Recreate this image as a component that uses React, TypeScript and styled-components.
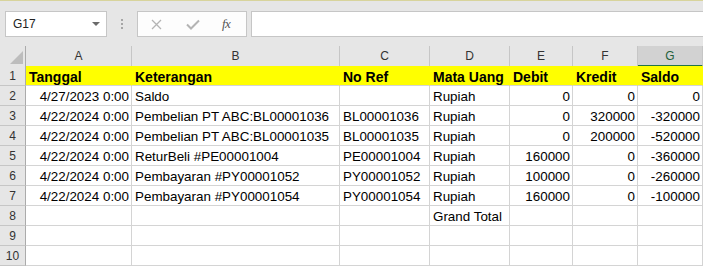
import React from 'react'
import styled, { createGlobalStyle, css } from 'styled-components'

const GlobalStyle = createGlobalStyle`
  html, body {
    margin: 0;
    padding: 0;
    background: #ffffff;
    overflow: hidden;
  }
  * {
    box-sizing: border-box;
  }
`

const Page = styled.div`
  width: 703px;
  height: 266px;
  overflow: hidden;
  font-family: 'Liberation Sans', Arial, sans-serif;
  background: #ffffff;
`

// formula bar
const FormulaBar = styled.div`
  display: flex;
  align-items: flex-start;
  height: 46px;
  padding: 10px 0 0 5px;
  background: #e6e6e6;
  border-top: 1px solid #d8d49c;
`

const NameBox = styled.div`
  display: flex;
  align-items: center;
  justify-content: space-between;
  width: 102px;
  height: 26px;
  padding: 0 6px 0 7px;
  background: #ffffff;
  border: 1px solid #c6c6c6;
  font-size: 12px;
  color: #222222;
`

const Caret = styled.span`
  width: 0;
  height: 0;
  border-left: 4px solid transparent;
  border-right: 4px solid transparent;
  border-top: 4px solid #6a6a6a;
`

const Grip = styled.div`
  display: flex;
  flex-direction: column;
  gap: 2px;
  width: 30px;
  padding: 8px 0 0 14px;

  & > span {
    width: 2px;
    height: 2px;
    background: #a6a6a6;
  }
`

const FxButtons = styled.div`
  display: flex;
  align-items: center;
  width: 110px;
  height: 26px;
  padding: 0 0 0 13px;
  background: #fdfdfd;
  border: 1px solid #c6c6c6;
`

const IconSlot = styled.span<{ $w: number }>`
  display: flex;
  align-items: center;
  width: ${({ $w }) => $w}px;
`

const Fx = styled.span`
  font-family: 'Liberation Serif', 'Times New Roman', serif;
  font-style: italic;
  font-size: 13px;
  color: #555555;
  letter-spacing: -0.5px;
`

const FormulaInput = styled.div`
  flex: 1;
  height: 26px;
  margin-left: 4px;
  background: #ffffff;
  border: 1px solid #c6c6c6;
  border-right: none;
`

// sheet grid
const Sheet = styled.div`
  display: grid;
  grid-template-columns: 26px 106px 208px 90px 80px 63px 65px 1fr;
  grid-auto-rows: 20px;
`

const headerBase = css`
  display: flex;
  align-items: center;
  justify-content: center;
  background: #e6e6e6;
  font-size: 12px;
  color: #333333;
`

const Corner = styled.div`
  ${headerBase};
  height: 21px;
  align-items: flex-end;
  justify-content: flex-end;
  padding: 0 2px 2px 0;
  border-right: 1px solid #ababab;
  border-bottom: 1px solid #ababab;
`

const CornerMark = styled.span`
  width: 0;
  height: 0;
  border-left: 13px solid transparent;
  border-bottom: 13px solid #bdbdbd;
`

const ColHead = styled.div<{ $active?: boolean }>`
  ${headerBase};
  height: 21px;
  border-right: 1px solid #c6c6c6;
  border-bottom: 1px solid #ababab;
  ${({ $active }) =>
    $active &&
    css`
      background: #d2d2d2;
      color: #1f5f3b;
      border-bottom: 2px solid #217346;
    `}
`

const RowHead = styled.div`
  ${headerBase};
  border-right: 1px solid #ababab;
  border-bottom: 1px solid #c6c6c6;
`

const Cell = styled.div<{ $align?: 'left' | 'right'; $fill?: boolean }>`
  display: flex;
  align-items: center;
  justify-content: ${({ $align }) => ($align === 'right' ? 'flex-end' : 'flex-start')};
  padding: 1px 2px 0 3px;
  border-right: 1px solid #d4d4d4;
  border-bottom: 1px solid #d4d4d4;
  font-size: 13.4px;
  color: #000000;
  white-space: nowrap;
  overflow: hidden;
  ${({ $fill }) =>
    $fill &&
    css`
      background: #ffff00;
      border-right-color: #ffff00;
      font-weight: bold;
      font-size: 14px;
      padding-top: 2px;
    `}
`

const columns = ['A', 'B', 'C', 'D', 'E', 'F', 'G']
const align: ('left' | 'right')[] = ['right', 'left', 'left', 'left', 'right', 'right', 'right']
const headers = ['Tanggal', 'Keterangan', 'No Ref', 'Mata Uang', 'Debit', 'Kredit', 'Saldo']

const data = [
  ['4/27/2023 0:00', 'Saldo', '', 'Rupiah', '0', '0', '0'],
  ['4/22/2024 0:00', 'Pembelian PT ABC:BL00001036', 'BL00001036', 'Rupiah', '0', '320000', '-320000'],
  ['4/22/2024 0:00', 'Pembelian PT ABC:BL00001035', 'BL00001035', 'Rupiah', '0', '200000', '-520000'],
  ['4/22/2024 0:00', 'ReturBeli #PE00001004', 'PE00001004', 'Rupiah', '160000', '0', '-360000'],
  ['4/22/2024 0:00', 'Pembayaran #PY00001052', 'PY00001052', 'Rupiah', '100000', '0', '-260000'],
  ['4/22/2024 0:00', 'Pembayaran #PY00001054', 'PY00001054', 'Rupiah', '160000', '0', '-100000'],
  ['', '', '', 'Grand Total', '', '', ''],
  ['', '', '', '', '', '', ''],
  ['', '', '', '', '', '', ''],
]

const CancelIcon = () => (
  <svg width="11" height="11" viewBox="0 0 11 11">
    <path d="M1 1 L10 10 M10 1 L1 10" stroke="#b4b4b4" strokeWidth="1.3" fill="none" />
  </svg>
)

const CheckIcon = () => (
  <svg width="14" height="11" viewBox="0 0 14 11">
    <path d="M1 5.5 L5 9.5 L13 1.5" stroke="#b4b4b4" strokeWidth="2" fill="none" />
  </svg>
)

const App: React.FC = () => {
  return (
    <Page>
      <GlobalStyle />
      <FormulaBar>
        <NameBox>
          <span>G17</span>
          <Caret />
        </NameBox>
        <Grip>
          <span />
          <span />
          <span />
        </Grip>
        <FxButtons>
          <IconSlot $w={35}>
            <CancelIcon />
          </IconSlot>
          <IconSlot $w={36}>
            <CheckIcon />
          </IconSlot>
          <Fx>fx</Fx>
        </FxButtons>
        <FormulaInput />
      </FormulaBar>

      <Sheet>
        <Corner>
          <CornerMark />
        </Corner>
        {columns.map((c) => (
          <ColHead key={c} $active={c === 'G'}>
            {c}
          </ColHead>
        ))}

        <RowHead>1</RowHead>
        {headers.map((h) => (
          <Cell key={h} $fill>
            {h}
          </Cell>
        ))}

        {data.map((row, i) => (
          <React.Fragment key={i}>
            <RowHead>{i + 2}</RowHead>
            {row.map((v, j) => (
              <Cell key={j} $align={align[j]}>
                {v}
              </Cell>
            ))}
          </React.Fragment>
        ))}
      </Sheet>
    </Page>
  )
}

export default App
